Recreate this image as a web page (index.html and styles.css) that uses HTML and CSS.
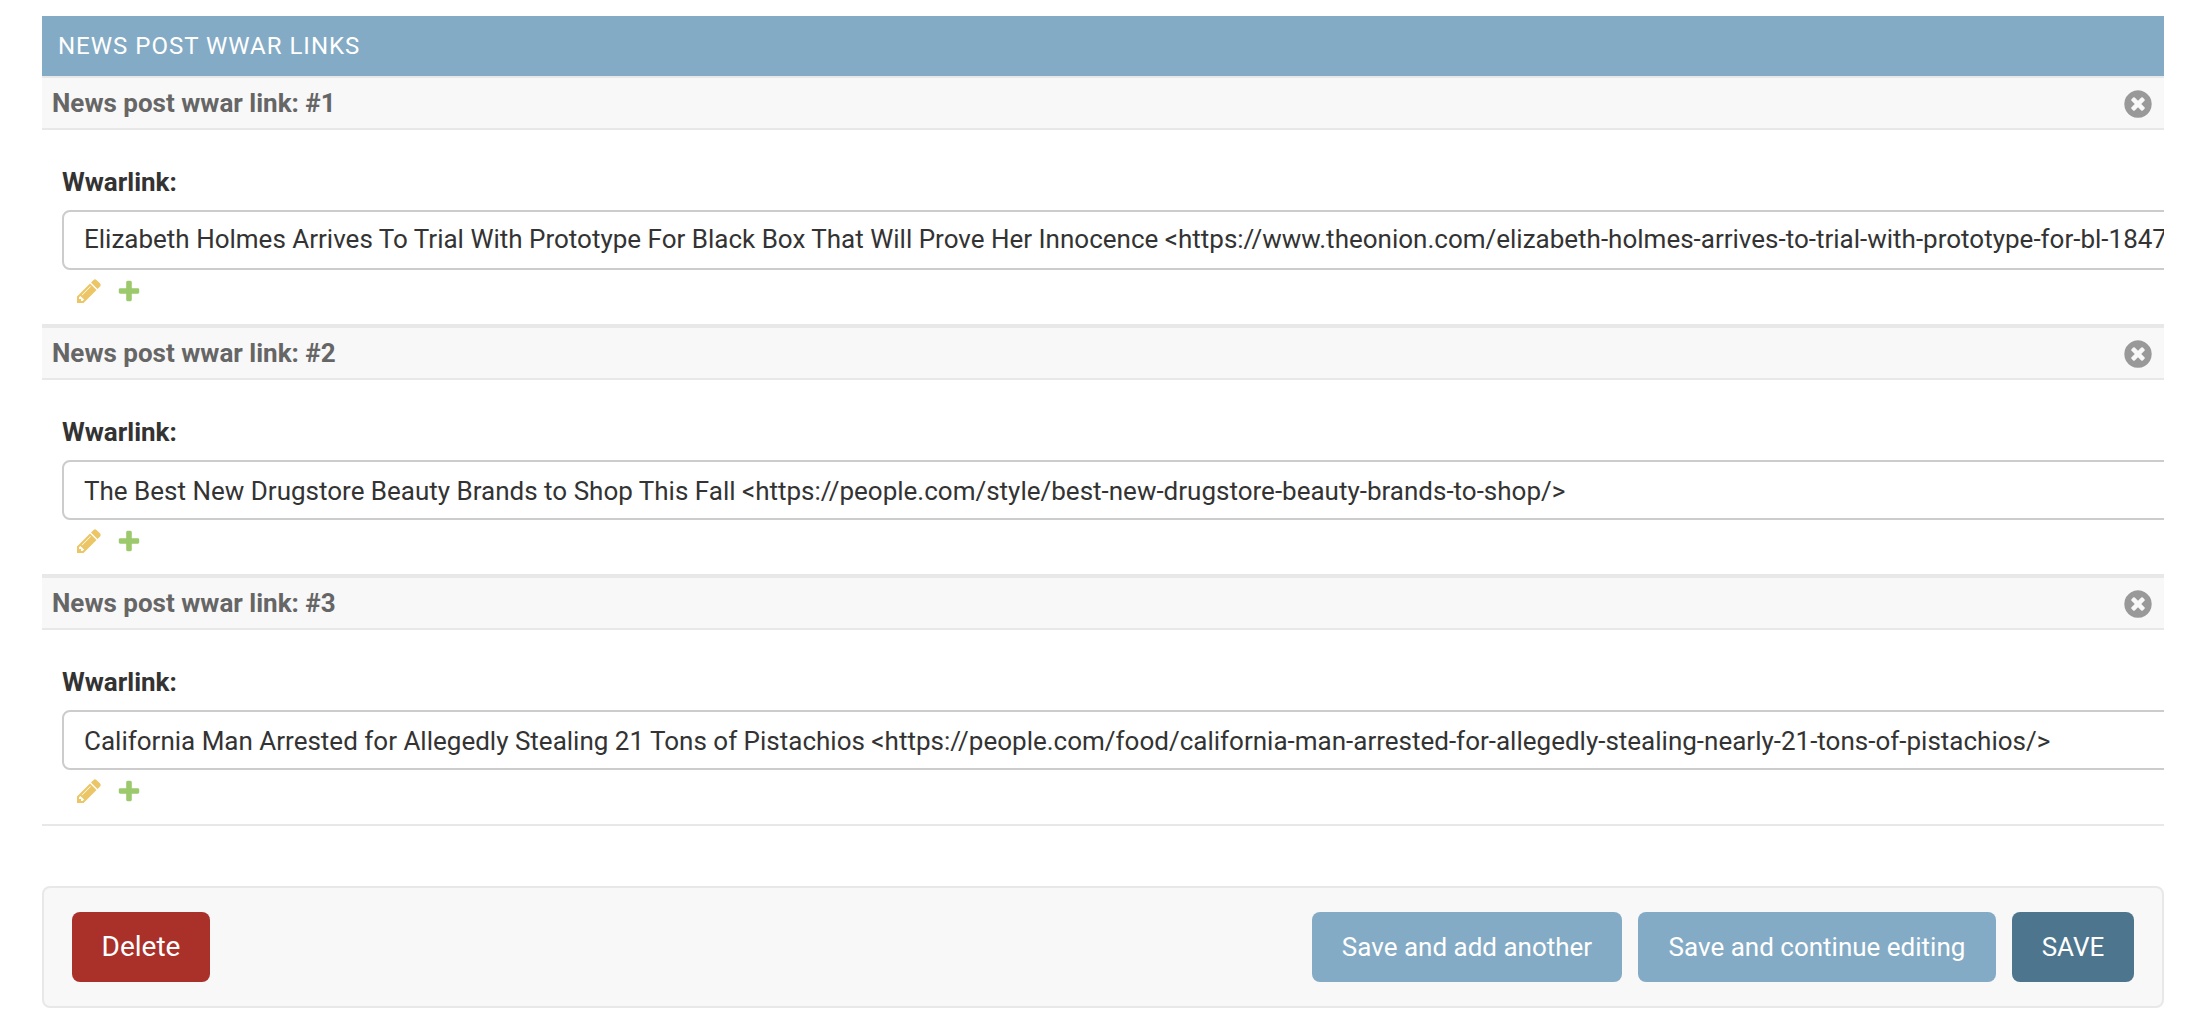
FILE: index.html
```html
<!DOCTYPE html>
<html lang="en">
<head>
<meta charset="utf-8">
<title>Change news post</title>
<link rel="stylesheet" href="styles.css">
</head>
<body>
<svg class="sprite" aria-hidden="true">
  <symbol id="pencil" viewBox="0 0 1792 1792"><path d="M491 1536l91-91-235-235-91 91v107h128v128h107zm523-928q0-22-22-22-10 0-17 7l-542 542q-7 7-7 17 0 22 22 22 10 0 17-7l542-542q7-7 7-17zm-54-192l416 416-832 832h-416v-416zm683 96q0 53-37 90l-166 166-416-416 166-165q36-38 90-38 53 0 91 38l235 234q37 39 37 91z"/></symbol>
  <symbol id="plus" viewBox="0 0 1792 1792"><path d="M1600 796v192q0 40-28 68t-68 28h-416v416q0 40-28 68t-68 28h-192q-40 0-68-28t-28-68v-416h-416q-40 0-68-28t-28-68v-192q0-40 28-68t68-28h416v-416q0-40 28-68t68-28h192q40 0 68 28t28 68v416h416q40 0 68 28t28 68z"/></symbol>
  <symbol id="remove" viewBox="0 0 1792 1792"><path d="M1277 1122q0-26-19-45l-181-181 181-181q19-19 19-45 0-27-19-46l-90-90q-19-19-46-19-26 0-45 19l-181 181-181-181q-19-19-45-19-27 0-46 19l-90 90q-19 19-19 46 0 26 19 45l181 181-181 181q-19 19-19 45 0 27 19 46l90 90q19 19 46 19 26 0 45-19l181-181 181 181q19 19 45 19 27 0 46-19l90-90q19-19 19-46zm387-226q0 209-103 385.5t-279.5 279.5-385.5 103-385.5-103-279.5-279.5-103-385.5 103-385.5 279.5-279.5 385.5-103 385.5 103 279.5 279.5 103 385.5z"/></symbol>
</svg>
<main>
  <section class="inline-group">
    <h2>News post wwar links</h2>
    <div class="inline-related">
      <h3><span>News post wwar link: #1</span><svg class="remove"><use href="#remove"/></svg></h3>
      <div class="field">
        <label>Wwarlink:</label>
        <div class="select tall-text">Elizabeth Holmes Arrives To Trial With Prototype For Black Box That Will Prove Her Innocence &lt;https://www.theonion.com/elizabeth-holmes-arrives-to-trial-with-prototype-for-bl-1847</div>
        <div class="actions"><svg class="change"><use href="#pencil"/></svg><svg class="add"><use href="#plus"/></svg></div>
      </div>
    </div>
    <div class="inline-related">
      <h3><span>News post wwar link: #2</span><svg class="remove"><use href="#remove"/></svg></h3>
      <div class="field">
        <label>Wwarlink:</label>
        <div class="select">The Best New Drugstore Beauty Brands to Shop This Fall &lt;https://people.com/style/best-new-drugstore-beauty-brands-to-shop/&gt;</div>
        <div class="actions"><svg class="change"><use href="#pencil"/></svg><svg class="add"><use href="#plus"/></svg></div>
      </div>
    </div>
    <div class="inline-related">
      <h3><span>News post wwar link: #3</span><svg class="remove"><use href="#remove"/></svg></h3>
      <div class="field">
        <label>Wwarlink:</label>
        <div class="select">California Man Arrested for Allegedly Stealing 21 Tons of Pistachios &lt;https://people.com/food/california-man-arrested-for-allegedly-stealing-nearly-21-tons-of-pistachios/&gt;</div>
        <div class="actions"><svg class="change"><use href="#pencil"/></svg><svg class="add"><use href="#plus"/></svg></div>
      </div>
    </div>
  </section>
  <div class="submit-row">
    <button class="delete">Delete</button>
    <button class="another">Save and add another</button>
    <button class="continue">Save and continue editing</button>
    <button class="save">SAVE</button>
  </div>
</main>
</body>
</html>
```
FILE: styles.css
```css
* { box-sizing: border-box; }
body { margin: 0; background: #fff; color: #333; font: 26px/30px Roboto, sans-serif; }
.sprite { display: none; }
main { padding: 16px 24px 0 42px; }
.inline-group { overflow: hidden; margin-bottom: 60px; }
h2 {
  margin: 0; height: 60px; padding: 0 16px;
  background: #84abc5; color: #fff;
  font-size: 24px; font-weight: 400; line-height: 60px;
  letter-spacing: 1px; text-transform: uppercase;
}
h3 {
  display: flex; justify-content: space-between; align-items: center;
  margin: 0; height: 54px; padding: 0 10px;
  background: #f8f8f8; border: solid #e8e8e8; border-width: 2px 0;
  color: #666; font-size: 26px; font-weight: 700;
}
.remove { width: 32px; height: 32px; fill: #999; position: relative; top: 1px; }
.field { height: 196px; padding: 36px 0 0 20px; border-bottom: 2px solid #e8e8e8; }
label { display: block; height: 44px; line-height: 32px; font-weight: 700; }
.select {
  width: 2260px; height: 60px; padding: 0 20px;
  border: 2px solid #ccc; border-radius: 8px;
  line-height: 58px; white-space: nowrap;
}
.tall-text { line-height: 54px; }
.actions { display: flex; align-items: center; gap: 13px; padding: 7px 13px; }
.actions svg { width: 26px; height: 26px; }
.actions .change { width: 28px; height: 28px; }
.change { fill: #ecc666; }
.add { fill: #9bc96b; }
.submit-row {
  display: flex; gap: 16px; height: 122px; padding: 24px 28px;
  background: #f8f8f8; border: 2px solid #e8e8e8; border-radius: 8px;
}
button {
  height: 70px; padding: 0; border: 0; border-radius: 8px;
  background: #84abc5; color: #fff; font: 26px/30px Roboto, sans-serif;
}
.delete { width: 138px; margin-right: auto; background: #aa302a; font-size: 28px; }
.another { width: 310px; }
.continue { width: 358px; }
.save { width: 122px; background: #4d758e; }
```
